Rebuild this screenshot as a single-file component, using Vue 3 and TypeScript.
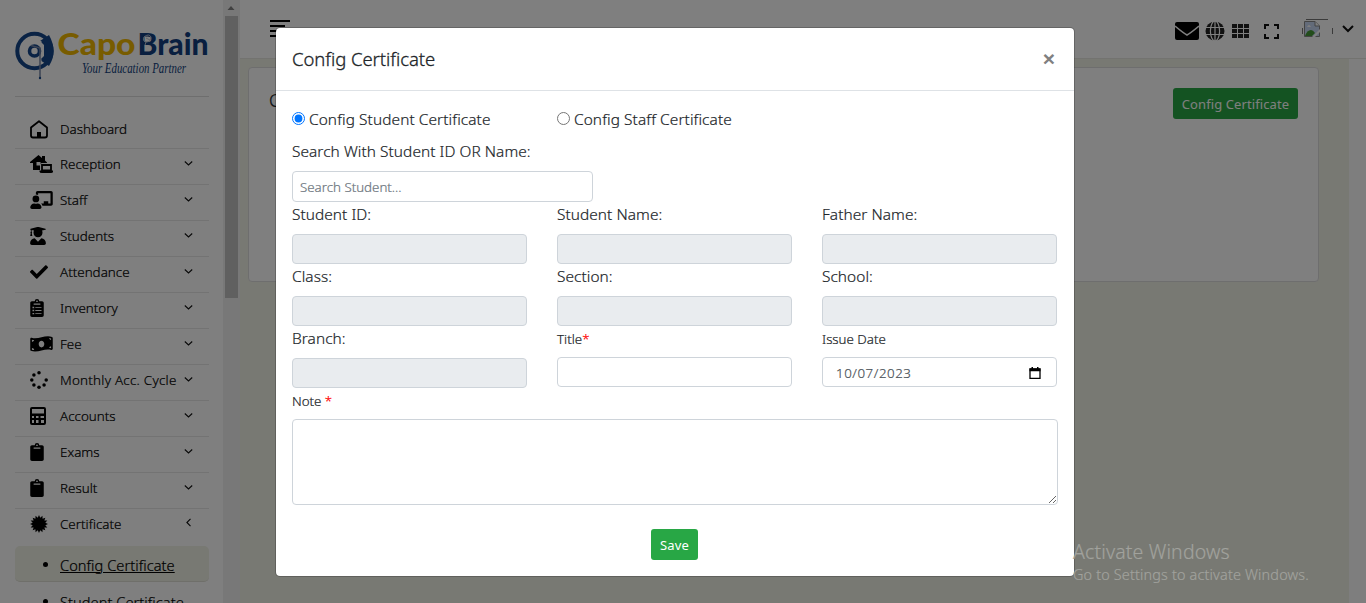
<script setup lang="ts">
import { ref } from 'vue'

interface MenuItem { label: string; icon: string; arrow?: 'down' | 'left' }

const menu: MenuItem[] = [
  { label: 'Dashboard', icon: 'home' },
  { label: 'Reception', icon: 'reception', arrow: 'down' },
  { label: 'Staff', icon: 'staff', arrow: 'down' },
  { label: 'Students', icon: 'students', arrow: 'down' },
  { label: 'Attendance', icon: 'check', arrow: 'down' },
  { label: 'Inventory', icon: 'list', arrow: 'down' },
  { label: 'Fee', icon: 'money', arrow: 'down' },
  { label: 'Monthly Acc. Cycle', icon: 'spinner', arrow: 'down' },
  { label: 'Accounts', icon: 'calc', arrow: 'down' },
  { label: 'Exams', icon: 'clipboard', arrow: 'down' },
  { label: 'Result', icon: 'clipboard', arrow: 'down' },
  { label: 'Certificate', icon: 'badge', arrow: 'left' },
]

const badgePoints = Array.from({ length: 32 }, (_, i) => {
  const r = i % 2 ? 6.8 : 9.5
  const a = (i * Math.PI) / 16
  return `${(9 + r * Math.sin(a)).toFixed(2)},${(9 - r * Math.cos(a)).toFixed(2)}`
}).join(' ')

const dots = Array.from({ length: 8 }, (_, i) => ({
  x: 9 + 7.2 * Math.cos((i * Math.PI) / 4),
  y: 9 + 7.2 * Math.sin((i * Math.PI) / 4),
})).filter((_, i) => i !== 7)

const kind = ref('student')
const readonlyFields = ['Student ID:', 'Student Name:', 'Father Name:', 'Class:', 'Section:', 'School:']
</script>

<template>
  <div class="page">
    <aside class="sidebar">
      <div class="brand">
        <svg width="208" height="76" viewBox="-1 -14 208 76">
          <circle cx="19.500" cy="22" r="17.200" fill="none" stroke="#15478a" stroke-width="4" />
          <path d="M25 12L34 6Q38.500 14 38.500 22Q38.500 30 34 37L25 31L29 27V16Z" fill="#15478a" />
          <path d="M26 14A10.500 10.500 0 1 0 26 30" fill="none" stroke="#fff" stroke-width="3" />
          <circle cx="19.500" cy="22" r="5" fill="none" stroke="#15478a" stroke-width="3.600" />
          <path d="M16 16.500L25 19V48" fill="none" stroke="#7786a8" stroke-width="1.500" />
          <circle cx="25" cy="49" r="1.200" fill="#15478a" />
          <text class="logo yellow" x="42.500" y="25.500" textLength="78" lengthAdjust="spacingAndGlyphs">Capo</text>
          <text class="logo blue" x="122.500" y="25.500" textLength="71" lengthAdjust="spacingAndGlyphs">Brain</text>
          <path d="M129 8q5-4 7 0q0 5-5 5q-4-1-2-5m2 1l4 2m-4 2l-1 3" fill="none" stroke="#b7c1d2" stroke-width="1" />
          <text class="tagline" x="67" y="44" textLength="104" lengthAdjust="spacingAndGlyphs">Your Education Partner</text>
        </svg>
      </div>
      <nav class="menu">
        <div v-for="(m, i) in menu" :key="m.label" class="item" :class="{ first: i === 0, last: i === 11 }">
          <span class="icon">
            <svg v-if="m.icon === 'home'" width="18" height="19" viewBox="0 0 18 19"><path d="M1 7.500L9 1.300L17 7.500V15.500Q17 17.500 15 17.500H3Q1 17.500 1 15.500Z" fill="none" stroke="#000" stroke-width="1.800" stroke-linejoin="round" /><path d="M7 12h4v5H7z" /></svg>
            <svg v-else-if="m.icon === 'reception'" width="23" height="18" viewBox="0 0 23 18"><path d="M0 7L8.500 0L12 3V1H15V5.500L17 7.500V8H12Q10 8 10 10V15H3V8H0Z" /><path d="M6.500 7h4v3.500h-4z" fill="#fff" /><path d="M12 10H21V15.500H12Z" fill="#fff" stroke="#000" stroke-width="1.800" /><path d="M9.500 15.500H23V16.500Q23 18 21 18H12Q9.500 18 9.500 16.500Z" /></svg>
            <svg v-else-if="m.icon === 'staff'" width="23" height="18" viewBox="0 0 640 512"><path d="M208 352c-2.400 0-4.800.350-7.100 1.100C188 357.300 174.400 360 160 360s-28-2.700-41-6.900c-2.200-.700-4.600-1.100-7-1.100C50 352-.300 402.500 0 464.600.100 490.900 21.700 512 48 512h224c26.300 0 47.900-21.100 48-47.400C320.300 402.500 270 352 208 352zm-48-32a96 96 0 1 0 0-192 96 96 0 0 0 0 192zM592 0H208c-26.500 0-48 22.200-48 49.600V96c23.400 0 45.100 6.800 64 17.800V64h352v288h-64v-64H384v64h-76.200c19.100 16.700 33.100 38.700 39.700 64H592c26.500 0 48-22.200 48-49.600V49.600C640 22.200 618.500 0 592 0z" /></svg>
            <svg v-else-if="m.icon === 'students'" width="16" height="18" viewBox="0 0 448 512"><path d="M319.400 320.600L224 416l-95.400-95.400C57.100 323.700 0 382.200 0 454.400v9.600c0 26.500 21.500 48 48 48h352c26.500 0 48-21.500 48-48v-9.600c0-72.200-57.100-130.700-128.600-133.800zM13.600 79.800l6.400 1.500v58.400c-7 4.200-12 11.500-12 20.300 0 8.400 4.600 15.400 11.100 19.700L3.500 242c-1.700 6.900 2.100 14 7.600 14h41.800c5.500 0 9.300-7.100 7.600-14l-15.600-62.300C51.400 175.400 56 168.400 56 160c0-8.800-5-16.100-12-20.300V87.100l66 15.900c-8.600 17.200-14 36.400-14 57 0 70.700 57.300 128 128 128s128-57.300 128-128c0-20.600-5.300-39.800-14-57l96.300-23.200c18.200-4.400 18.200-27.100 0-31.500l-190.400-46c-13-3.100-26.700-3.100-39.700 0L13.600 48.200c-18.100 4.400-18.100 27.200 0 31.600z" /></svg>
            <svg v-else-if="m.icon === 'check'" width="18" height="18" viewBox="0 0 512 512"><path d="M173.900 439.400l-166.400-166.400c-10-10-10-26.200 0-36.200l36.200-36.200c10-10 26.200-10 36.200 0L192 312.700 432.100 72.600c10-10 26.200-10 36.200 0l36.200 36.200c10 10 10 26.200 0 36.200l-294.400 294.400c-10 10-26.200 10-36.200 0z" /></svg>
            <svg v-else-if="m.icon === 'money'" width="23" height="18" viewBox="0 0 640 512"><path d="M621.200 54.500C582.400 38.200 543.600 32 504.800 32 381.600 32 258.400 94.800 135.200 94.800 103.900 94.800 72.600 90.800 41.300 80.800 20.300 74 0 89.500 0 111v307c0 13.500 7.800 26.200 20.300 31.500C58.700 465.800 97 472 135.200 472 258.400 472 381.600 409.200 504.800 409.200c31.300 0 62.600 4 93.900 14C619.700 430 640 414.500 640 393V86c0-13.500-7.800-26.200-18.800-31.500zM48 132.200c20.100 5 41.100 8.500 62.200 9.900C104.300 171.200 78.700 192 48 192zm0 284v-47.800c34.400 0 62.200 26.600 64.100 60.400C89 427.300 68 423.700 48 416.200zM320 352c-44.200 0-80-43-80-96s35.800-96 80-96 80 43 80 96-35.800 96-80 96zm272 28c-17.500-4.400-35.500-7.600-53.900-9.200 4.600-27.700 26.400-49.500 53.900-51.800zm0-236c-29.200-2.500-52.500-26.700-53.500-56.300 18.900 1.400 37 5.100 53.500 11.800z" /></svg>
            <svg v-else-if="m.icon === 'spinner'" width="18" height="18" viewBox="0 0 18 18"><circle v-for="(d, k) in dots" :key="k" :cx="d.x" :cy="d.y" r="1.750" /></svg>
            <svg v-else-if="m.icon === 'calc'" width="16" height="18" viewBox="0 0 16 18"><path fill-rule="evenodd" d="M2 0H14Q16 0 16 2V16Q16 18 14 18H2Q0 18 0 16V2Q0 0 2 0ZM2 2V6.500H14V2ZM2 9V11H4V9ZM6 9V11H8.500V9ZM10.500 9V11H14V9ZM2 13V16H4V13ZM6 13V16H8.500V13ZM11 13V16H14V13Z" /></svg>
            <svg v-else-if="m.icon === 'badge'" width="18" height="18" viewBox="-.5 -.5 19 19"><polygon :points="badgePoints" /></svg>
            <svg v-else width="14" height="18" viewBox="0 0 384 512"><path d="M384 112v352c0 26.500-21.500 48-48 48H48c-26.500 0-48-21.500-48-48V112c0-26.500 21.500-48 48-48h80a64 64 0 0 1 128 0h80c26.500 0 48 21.500 48 48zM192 40a24 24 0 1 0 0 48 24 24 0 0 0 0-48m96 114v-20a6 6 0 0 0-6-6H102a6 6 0 0 0-6 6v20a6 6 0 0 0 6 6h180a6 6 0 0 0 6-6z" /><path v-if="m.icon === 'list'" d="M64 220h48v40H64zm80 8h176v24H144zM64 308h48v40H64zm80 8h176v24H144zM64 396h48v40H64zm80 8h176v24H144z" fill="#fff" /></svg>
          </span>
          <span class="label" :class="{ wide: m.icon === 'spinner' }">{{ m.label }}</span>
          <svg v-if="m.arrow" class="chev" width="9" height="9" viewBox="0 0 9 9"><path :d="m.arrow === 'down' ? 'M.8 2.500L4.500 6L8.200 2.500' : 'M6.500 .8L2.900 4.500L6.500 8.200'" fill="none" stroke="#111" stroke-width="1.100" /></svg>
        </div>
        <div class="sub active"><i></i><a>Config Certificate</a></div>
        <div class="sub"><i></i><a>Student Certificate</a></div>
      </nav>
    </aside>
    <div class="track">
      <svg width="16" height="16" viewBox="0 0 16 16"><path d="M4.500 10L8 6L11.500 10Z" fill="#808080" /></svg>
      <div class="thumb"></div>
    </div>
    <main class="main">
      <header class="topbar">
        <svg width="22" height="19" viewBox="0 0 22 19"><path d="M0 2H20M0 7H15M0 12H20M0 17H15" stroke="#000" stroke-width="2" /></svg>
        <div class="tools">
          <svg class="mail" width="24" height="18" viewBox="0 0 24 18"><rect width="24" height="18" rx="2" /><path d="M0 4Q9 11.500 12 13Q15 11.500 24 4" fill="none" stroke="#fff" stroke-width="1.600" /></svg>
          <svg class="globe" width="20" height="20" viewBox="0 0 20 20"><circle cx="10" cy="10" r="9.500" fill="#222" /><path d="M10 0V20M.5 6.500H19.500M.5 13.500H19.500" stroke="#fff" stroke-width="1.200" /><ellipse cx="10" cy="10" rx="4.600" ry="10" fill="none" stroke="#fff" stroke-width="1.200" /></svg>
          <svg class="grid" width="17" height="15" viewBox="0 0 17 15"><path d="M0 0h5v4H0zM6 0h5v4H6zM12 0h5v4h-5zM0 5h5v4H0zM6 5h5v4H6zM12 5h5v4h-5zM0 10h5v4H0zM6 10h5v4H6zM12 10h5v4h-5z" fill="#222" /></svg>
          <svg class="expand" width="15" height="15" viewBox="0 0 15 15"><path d="M1 5V1H5M10 1H14V5M14 10V14H10M5 14H1V10" fill="none" stroke="#111" stroke-width="2" /></svg>
          <svg class="avatar" width="31" height="21" viewBox="0 0 31 21"><path d="M4 .5H26M.5 9V15M30.500 9V15" fill="none" stroke="#777" stroke-width="1" /><path d="M2.500 2.500H13L17.500 7V17.500H2.500Z" fill="#c6d6f2" stroke="#888" /><path d="M13 2.500V7H17.500" fill="#fff" stroke="#888" /><path d="M3 17Q5 11 9 11Q11 11 13 14L10 17Z" fill="#469b36" /><path d="M5 8q2-4 4 0z" fill="#fff" /><path d="M10 18L18 10V13L13 18Z" fill="#fff" /></svg>
          <svg class="caret" width="12" height="8" viewBox="0 0 12 8"><path d="M1 1L6 6L11 1" fill="none" stroke="#111" stroke-width="2" /></svg>
        </div>
      </header>
      <div class="content">
        <section class="card"><h2>Certificate</h2><button class="green">Config Certificate</button></section>
        <div class="gutter"></div>
      </div>
    </main>

    <div class="backdrop">
      <div class="modal">
        <div class="mhead"><h5>Config Certificate</h5><span class="close">×</span></div>
        <div class="mbody">
          <div class="cols radios">
            <label><input v-model="kind" type="radio" value="student" /><span>Config Student Certificate</span></label>
            <label><input v-model="kind" type="radio" value="staff" /><span>Config Staff Certificate</span></label>
          </div>
          <div class="searchlabel">Search With Student ID OR Name:</div>
          <input class="ctl search" type="text" placeholder="Search Student..." />
          <div class="cols">
            <div v-for="f in readonlyFields" :key="f" class="field"><label>{{ f }}</label><div class="ctl off"></div></div>
            <div class="field"><label>Branch:</label><div class="ctl off"></div></div>
            <div class="field small"><label>Title<b>*</b></label><div class="ctl"></div></div>
            <div class="field small"><label>Issue Date</label>
              <div class="ctl date"><span>10/07/2023</span>
                <svg width="12" height="12" viewBox="0 0 12 12"><path d="M1 2H11V11.300H1Z" fill="none" stroke="#000" stroke-width="1.300" /><path d="M.5 1.500H11.500V4.200H.5ZM2.500 0H4V2H2.500ZM8 0H9.500V2H8Z" /></svg>
              </div>
            </div>
          </div>
          <div class="field small note"><label>Note <b>*</b></label><textarea class="ctl"></textarea></div>
          <div class="actions"><button class="green save">Save</button></div>
        </div>
      </div>
    </div>
    <div class="watermark"><p>Activate Windows</p><span>Go to Settings to activate Windows.</span></div>
  </div>
</template>

<style scoped>
* { box-sizing: border-box; }
.page { position: relative; display: flex; width: 1366px; height: 603px; overflow: hidden; font-family: "Noto Sans", sans-serif; font-weight: 300; font-size: 13.4px; -webkit-text-stroke: .2px; color: #212529; background: #f1f2e6; }
.sidebar { width: 223px; height: 603px; padding: 0 0 0 15px; background: #fff; overflow: hidden; flex: none; }
.brand { height: 97px; padding-top: 15px; border-bottom: 1px solid #dcdcdc; width: 194px; }
.brand svg { display: block; margin-left: -1px; }
.logo { font: 900 31px Lato, sans-serif; }
.yellow { fill: #f0b800; }
.blue { fill: #123f80; }
.tagline { font: italic 15px "Liberation Serif", serif; fill: #123f80; }
.item { display: flex; align-items: center; height: 36px; padding-left: 15px; border-bottom: 1px solid #e6e6e6; width: 194px; padding-bottom: 5px; color: #000; }
.item.first { height: 52px; padding: 13px 0 0 15px; }
.item.last { border: 0; padding-bottom: 7px; }
.icon { width: 30px; display: flex; }
.label { flex: 1; white-space: nowrap; line-height: 18px; }
.label.wide { letter-spacing: .25px; }
.chev { margin-right: 16px; margin-top: -2px; }
.sub { display: flex; align-items: center; height: 36px; margin-bottom: 1px; padding: 1px 0 0 28px; font-size: 14.6px; letter-spacing: .05px; color: #000; border-radius: 5px; width: 194px; }
.sub.active { margin-top: 1px; padding-top: 2px; background: #f1f2e6; border-bottom: 1px solid #dedfd5; }
.sub.active a { text-decoration: underline; }
.sub i { width: 5px; height: 5px; border-radius: 50%; background: #000; margin-right: 12px; }
.track { width: 17px; height: 603px; background: #f1f1f1; flex: none; }
.track svg { display: block; }
.thumb { width: 13px; height: 282px; margin-left: 2px; background: #c1c1c1; }
.main { flex: 1; display: flex; flex-direction: column; }
.topbar { height: 58px; display: flex; justify-content: space-between; background: #fff; padding: 19px 12px 0 30px; }
.tools { display: flex; align-items: flex-start; }
.mail { margin: 3px 6px 0 0; }
.globe { margin: 2px 7px 0 0; }
.grid { margin: 5px 15px 0 0; }
.expand { margin: 5px 23px 0 0; }
.avatar { margin-right: 9px; }
.caret { margin-top: 6px; }
.content { flex: 1; display: flex; justify-content: space-between; border-top: 1px solid #e6e6e0; }
.card { display: flex; justify-content: space-between; align-items: flex-start; width: 1071px; height: 215px; margin: 8px 0 0 8px; padding: 20px; background: #fff; border: 1px solid #ddd; border-radius: 4px; }
.card h2 { margin: 0; font-size: 18px; font-weight: 300; line-height: 25px; }
.gutter { width: 17px; background: #fcfcfc; }
.green { height: 31px; width: 125px; padding: 0; border: 0; border-radius: 3px; background: #28a745; color: #fff; font: 13px "Noto Sans", sans-serif; letter-spacing: .1px; -webkit-text-stroke: 0; }
.green.save { width: 47px; margin-right: 1px; }
.backdrop { position: absolute; inset: 0; padding: 27px 0 0 275px; background: rgba(0,0,0,.5); }
.modal { width: 800px; height: 550px; background: #fff; background-clip: padding-box; border: 1px solid rgba(0,0,0,.2); border-radius: 5px; }
.mhead { height: 63px; display: flex; justify-content: space-between; padding: 18px 19px 0 16px; border-bottom: 1px solid #dee2e6; }
.mhead h5 { margin: 0; font-size: 18.5px; font-weight: 300; line-height: 25px; letter-spacing: -.06px; -webkit-text-stroke: .3px; }
.close { font: 700 21px/25px "Liberation Sans", sans-serif; color: #808080; -webkit-text-stroke: 0; }
.mbody { padding: 16px 16px 0 16px; font-size: 15.4px; letter-spacing: .07px; }
.cols { display: grid; grid-template-columns: repeat(3, 235px); column-gap: 30px; }
.radios { height: 33px; letter-spacing: .1px; }
.radios label { display: flex; height: 24px; align-items: center; white-space: nowrap; }
.radios span { padding-top: 1px; }
.radios input { width: 13px; height: 13px; margin: 0 4px 2px 0; accent-color: #0075ff; }
.searchlabel { height: 31px; line-height: 24px; }
.ctl { display: block; width: 100%; height: 30px; border: 1px solid #ced4da; border-radius: 4px; background: #fff; }
.ctl.off { background: #e9ecef; }
.ctl.search { width: 301px; height: 31px; padding: 4px 7px; font: 300 13.3px "Noto Sans", sans-serif; -webkit-text-stroke: .2px; }
.ctl.search::placeholder { color: #6c757d; }
.field { height: 62px; }
.field label { display: block; height: 32px; line-height: 26px; }
.field.small { font-size: 13.3px; letter-spacing: 0; }
.field.small label { height: 31px; }
.small b { color: #f00; font-weight: 300; }
.date { display: flex; align-items: center; justify-content: space-between; padding: 1px 15px 0 13px; letter-spacing: .55px; color: #495057; }
.field.note { height: 117px; }
textarea.ctl { height: 86px; resize: vertical; }
.actions { display: flex; justify-content: center; padding-top: 24px; }
.watermark { position: absolute; left: 1073px; top: 539px; color: #a1a29d; white-space: nowrap; }
.watermark p { margin: 0; font-size: 19.500px; line-height: 26px; letter-spacing: .15px; }
.watermark span { display: block; font-size: 14.400px; line-height: 19px; letter-spacing: .17px; }
</style>
